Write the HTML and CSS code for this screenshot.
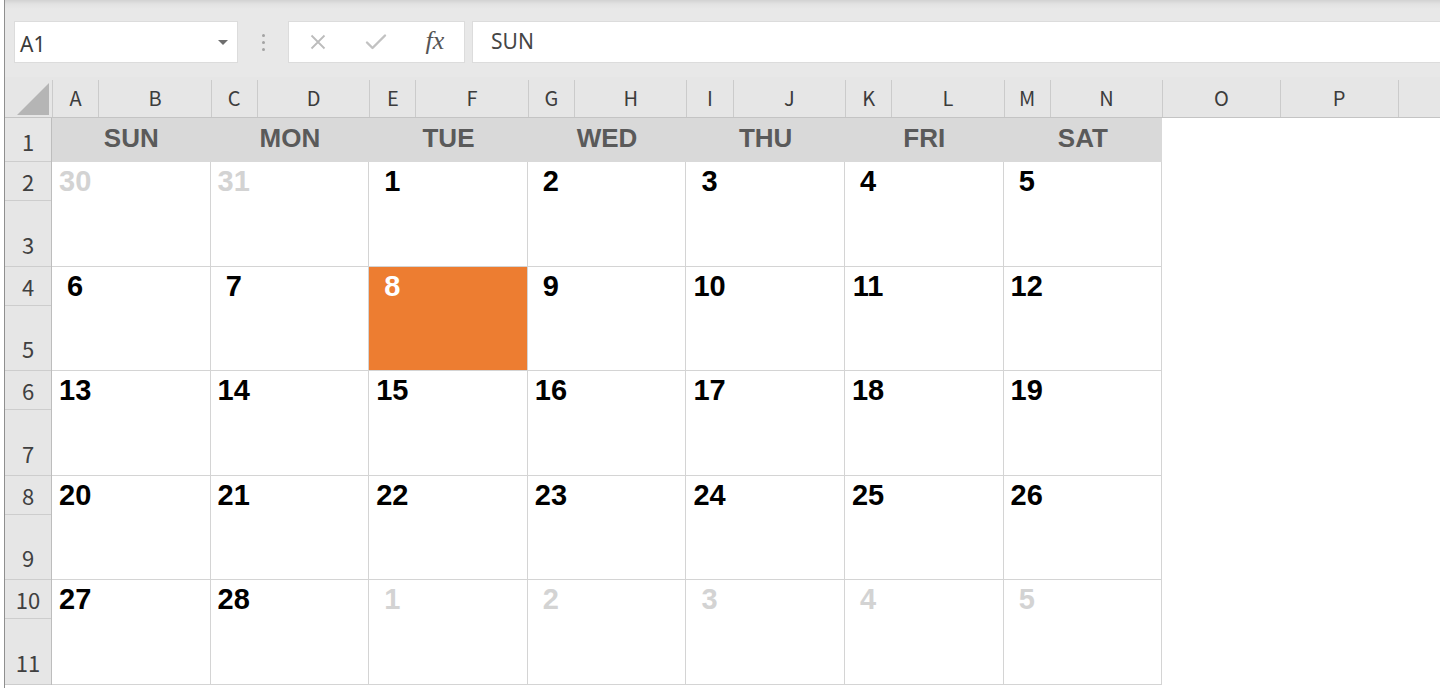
FILE: index.html
```html
<!DOCTYPE html>
<html lang="ja">
<head>
<meta charset="UTF-8">
<meta name="viewport" content="width=device-width, initial-scale=1.0">
<title>カレンダー</title>
<link rel="stylesheet" href="styles.css">
</head>
<body>
<div class="app">

  <!-- 数式バー -->
  <div class="formula-bar">
    <div class="name-box">
      <span class="cell-name">A1</span>
      <span class="caret"></span>
    </div>
    <div class="grip"><i></i><i></i><i></i></div>
    <div class="fx-buttons">
      <span class="fx-slot">
        <svg width="18" height="18" viewBox="0 0 18 18"><path d="M2.5 2.5 L15.5 15.5 M15.5 2.5 L2.5 15.5" stroke="#bcbcbc" stroke-width="1.8" fill="none"/></svg>
      </span>
      <span class="fx-slot">
        <svg width="22" height="18" viewBox="0 0 22 18"><path d="M2 9.5 L7.5 15 L20 2.5" stroke="#c2c2c2" stroke-width="2.4" fill="none" stroke-linecap="round" stroke-linejoin="round"/></svg>
      </span>
      <span class="fx-slot fx">fx</span>
    </div>
    <div class="formula-input">SUN</div>
  </div>

  <!-- 列見出し -->
  <div class="col-head">
    <div class="corner">
      <svg width="32" height="32" viewBox="0 0 32 32"><polygon points="32,0 32,32 0,32" fill="#b5b5b5"/></svg>
    </div>
    <div class="col narrow">A</div><div class="col wide">B</div>
    <div class="col narrow">C</div><div class="col wide">D</div>
    <div class="col narrow">E</div><div class="col wide">F</div>
    <div class="col narrow">G</div><div class="col wide">H</div>
    <div class="col narrow">I</div><div class="col wide">J</div>
    <div class="col narrow">K</div><div class="col wide">L</div>
    <div class="col narrow">M</div><div class="col wide">N</div>
    <div class="col other">O</div><div class="col other">P</div>
    <div class="col rest"></div>
  </div>

  <div class="sheet-body">
    <!-- 行見出し -->
    <div class="row-head">
      <div class="row title-row">1</div>
      <div class="row top-row">2</div><div class="row bottom-row">3</div>
      <div class="row top-row">4</div><div class="row bottom-row">5</div>
      <div class="row top-row">6</div><div class="row bottom-row">7</div>
      <div class="row top-row">8</div><div class="row bottom-row">9</div>
      <div class="row top-row">10</div><div class="row bottom-row">11</div>
    </div>

    <!-- カレンダー -->
    <div class="calendar">
      <div class="dow">SUN</div>
      <div class="dow">MON</div>
      <div class="dow">TUE</div>
      <div class="dow">WED</div>
      <div class="dow">THU</div>
      <div class="dow">FRI</div>
      <div class="dow">SAT</div>

      <div class="day muted"><span class="num">30</span></div>
      <div class="day muted"><span class="num">31</span></div>
      <div class="day"><span class="num">1</span></div>
      <div class="day"><span class="num">2</span></div>
      <div class="day"><span class="num">3</span></div>
      <div class="day"><span class="num">4</span></div>
      <div class="day"><span class="num">5</span></div>

      <div class="day"><span class="num">6</span></div>
      <div class="day"><span class="num">7</span></div>
      <div class="day today"><span class="num">8</span></div>
      <div class="day"><span class="num">9</span></div>
      <div class="day"><span class="num">10</span></div>
      <div class="day"><span class="num">11</span></div>
      <div class="day"><span class="num">12</span></div>

      <div class="day"><span class="num">13</span></div>
      <div class="day"><span class="num">14</span></div>
      <div class="day"><span class="num">15</span></div>
      <div class="day"><span class="num">16</span></div>
      <div class="day"><span class="num">17</span></div>
      <div class="day"><span class="num">18</span></div>
      <div class="day"><span class="num">19</span></div>

      <div class="day"><span class="num">20</span></div>
      <div class="day"><span class="num">21</span></div>
      <div class="day"><span class="num">22</span></div>
      <div class="day"><span class="num">23</span></div>
      <div class="day"><span class="num">24</span></div>
      <div class="day"><span class="num">25</span></div>
      <div class="day"><span class="num">26</span></div>

      <div class="day"><span class="num">27</span></div>
      <div class="day"><span class="num">28</span></div>
      <div class="day muted"><span class="num">1</span></div>
      <div class="day muted"><span class="num">2</span></div>
      <div class="day muted"><span class="num">3</span></div>
      <div class="day muted"><span class="num">4</span></div>
      <div class="day muted"><span class="num">5</span></div>
    </div>
  </div>

</div>
</body>
</html>
```

FILE: styles.css
```css
* {
  box-sizing: border-box;
}
body {
  margin: 0;
  padding-left: 4px;
  background: #fff;
  font-family: "Noto Sans", "Noto Sans CJK JP", sans-serif;
  overflow: hidden;
}
.app {
  border-left: 1px solid #8f8f8f;
  height: 688px;
}

/* 数式バー */
.formula-bar {
  display: flex;
  align-items: stretch;
  height: 77px;
  padding: 21px 0 14px 9px;
  background: linear-gradient(#d2d2d2 0, #e2e2e2 4px, #e8e8e8 9px, #e8e8e8 100%);
}
.name-box {
  width: 224px;
  display: flex;
  align-items: center;
  justify-content: space-between;
  padding: 0 9px 0 5px;
  background: #fff;
  border: 1px solid #dcdcdc;
}
.cell-name {
  font-size: 21px;
  color: #3a3a3a;
  padding-top: 3px;
}
.caret {
  width: 0;
  height: 0;
  border-left: 5px solid transparent;
  border-right: 5px solid transparent;
  border-top: 5px solid #6e6e6e;
}
.grip {
  width: 50px;
  display: flex;
  flex-direction: column;
  align-items: center;
  justify-content: center;
  gap: 4px;
}
.grip i {
  width: 3px;
  height: 3px;
  border-radius: 50%;
  background: #a3a3a3;
}
.fx-buttons {
  width: 177px;
  display: flex;
  background: #fff;
  border: 1px solid #dcdcdc;
}
.fx-slot {
  flex: 1;
  display: flex;
  align-items: center;
  justify-content: center;
}
.fx {
  font-family: "Liberation Serif", serif;
  font-style: italic;
  font-size: 26px;
  color: #555;
  padding-bottom: 2px;
}
.formula-input {
  flex: 1;
  margin-left: 7px;
  display: flex;
  align-items: center;
  padding-left: 18px;
  padding-bottom: 3px;
  background: #fff;
  border: 1px solid #dcdcdc;
  border-right: none;
  font-size: 21px;
  color: #454545;
}

/* 列見出し */
.col-head {
  display: flex;
  height: 41px;
  background: #e6e6e6;
  border-bottom: 1px solid #c4c4c4;
}
.corner {
  width: 47px;
  flex: none;
  padding: 6px 0 0 12px;
}
.col {
  flex: none;
  margin-top: 3px;
  border-left: 1px solid #cbcbcb;
  display: flex;
  align-items: center;
  justify-content: center;
  font-family: "Noto Sans CJK JP", sans-serif;
  font-size: 20px;
  color: #3c3c3c;
  padding-bottom: 2px;
}
.narrow {
  width: 46.3px;
}
.wide {
  width: 112.3px;
}
.other {
  width: 117.7px;
}
.rest {
  flex: 1;
}

/* シート本体 */
.sheet-body {
  display: flex;
}
.row-head {
  width: 47px;
  flex: none;
  background: #e6e6e6;
  border-right: 1px solid #bdbdbd;
}
.row {
  display: flex;
  justify-content: center;
  border-bottom: 1px solid #cdcdcd;
  font-family: "Noto Sans CJK JP", sans-serif;
  font-size: 22px;
  line-height: 1;
  color: #404040;
}
.title-row {
  height: 44px;
  align-items: center;
  padding-top: 2px;
}
.top-row {
  height: 39px;
  align-items: center;
}
.bottom-row {
  height: 65.6px;
  align-items: flex-end;
  padding-bottom: 11px;
}

/* カレンダー */
.calendar {
  display: grid;
  grid-template-columns: repeat(7, 158.6px);
  grid-template-rows: 44px repeat(5, 104.6px);
}
.dow {
  display: flex;
  align-items: center;
  justify-content: center;
  background: #d9d9d9;
  font-family: "Liberation Sans", Arial, sans-serif;
  font-weight: bold;
  font-size: 26px;
  color: #5a5a5a;
  padding-bottom: 3px;
}
.day {
  display: grid;
  grid-template-columns: 46.3px;
  grid-template-rows: 39px;
  border-right: 1px solid #d4d4d4;
  border-bottom: 1px solid #d4d4d4;
}
.num {
  place-self: center;
  font-family: "Liberation Sans", Arial, sans-serif;
  font-weight: bold;
  font-size: 29px;
  line-height: 1;
  color: #000;
}
.muted .num {
  color: #d3d3d3;
}
.today {
  background: #ed7d31;
}
.today .num {
  color: #fff;
}
```
